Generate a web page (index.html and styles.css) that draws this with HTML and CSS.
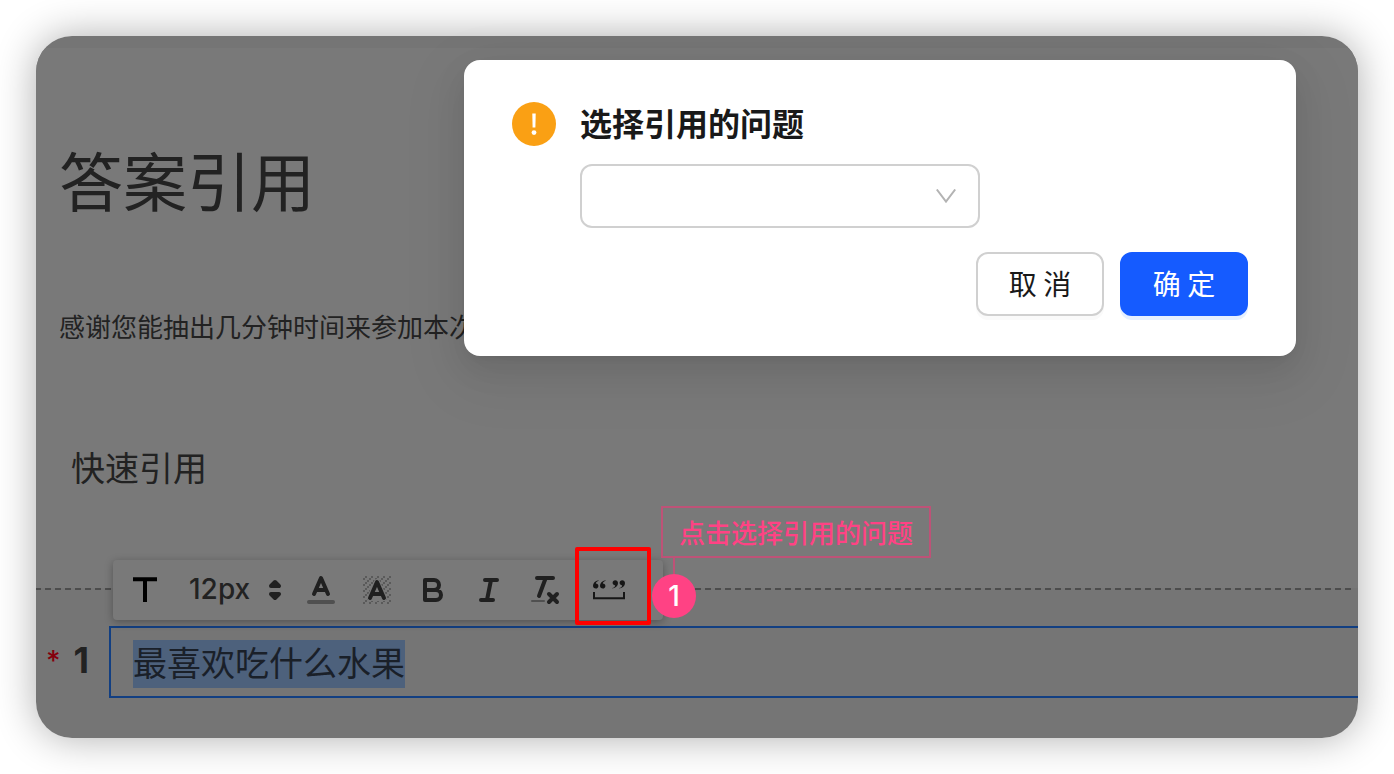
FILE: index.html
```html
<!DOCTYPE html>
<html lang="zh-CN">
<head>
<meta charset="utf-8">
<title>答案引用</title>
<link rel="stylesheet" href="styles.css">
</head>
<body>
<main class="frame">
  <div class="survey">
    <header class="survey-head">
      <h1 class="survey-title">答案引用</h1>
      <p class="survey-intro">感谢您能抽出几分钟时间来参加本次</p>
      <h2 class="survey-section">快速引用</h2>
    </header>
    <section class="question">
      <div class="question-divider"></div>
      <div class="question-row">
        <div class="question-index"><span class="required">*</span><span class="number">1</span></div>
        <div class="question-editor" role="textbox" aria-label="题目"><span class="selection">最喜欢吃什么水果</span></div>
      </div>
      <div class="toolbar" role="toolbar" aria-label="文本格式">
        <button class="tool tool-text" type="button" aria-label="字体">
          <svg width="24" height="26" viewBox="0 0 24 26"><path d="M0 2.2H24M12 2V25" fill="none" stroke="#000" stroke-width="4"/></svg>
        </button>
        <div class="size-picker">
          <select class="size-select" aria-label="字号"><option>12px</option></select>
          <svg class="size-arrows" width="36" height="36" viewBox="0 0 18 18"><path class="solid" d="M7 11L9 13L11 11ZM7 7L9 5L11 7Z"/></svg>
        </div>
        <button class="tool" type="button" aria-label="文字颜色">
          <svg width="36" height="36" viewBox="0 0 18 18"><path class="stroke faint" d="M3 15H15"/><path class="stroke" d="M5.5 11L9 3L12.5 11M11.63 9H6.38"/></svg>
        </button>
        <button class="tool" type="button" aria-label="背景颜色">
          <svg width="36" height="36" viewBox="0 0 18 18">
            <pattern id="hatch" width="3" height="3" patternUnits="userSpaceOnUse"><path class="hatch" d="M2 0h1v1h-1zM1 1h1v1h-1zM0 2h1v1h-1z"/></pattern>
            <rect x="2" y="2" width="14" height="14" fill="url(#hatch)"/>
            <path class="halo" d="M5.5 13L9 5L12.5 13Z"/>
            <path class="stroke" d="M5.5 13L9 5L12.5 13M11.63 11H6.38"/>
          </svg>
        </button>
        <button class="tool" type="button" aria-label="加粗">
          <svg width="36" height="36" viewBox="0 0 18 18"><path class="stroke" d="M5 4H9.5A2.5 2.5 0 0 1 9.5 9H5ZM5 9H10.5A2.5 2.5 0 0 1 10.5 14H5Z"/></svg>
        </button>
        <button class="tool" type="button" aria-label="斜体">
          <svg width="36" height="36" viewBox="0 0 18 18"><path class="stroke" d="M7 4H13M5 14H11M8 14L10 4"/></svg>
        </button>
        <button class="tool" type="button" aria-label="清除格式">
          <svg width="36" height="36" viewBox="0 0 18 18"><path class="stroke" d="M5 3H13M6 12L9.35 3M11 11L15 15M15 11L11 15"/><rect class="rule" x="2" y="14" width="7" height="1" rx=".5"/></svg>
        </button>
        <button class="tool tool-quote" type="button" aria-label="引用答案">
          <svg width="32" height="20" viewBox="0 0 32 20">
            <g fill="#161616">
              <path id="open-quote" d="M5.6 .2C2 .8 0 3 0 5.8C0 7.5 1.2 8.6 2.8 8.6C4.3 8.6 5.4 7.5 5.4 6C5.4 4.5 4.4 3.6 2.8 3.4C3.1 2.1 4.1 1.2 5.6 .7Z"/>
              <use href="#open-quote" x="7"/>
              <use href="#open-quote" transform="rotate(180 16 4.4)"/>
              <use href="#open-quote" transform="rotate(180 12.5 4.4)"/>
            </g>
            <path d="M1 12V18.2H31V12" fill="none" stroke="#161616" stroke-width="2"/>
          </svg>
        </button>
        <div class="highlight-box"></div>
        <div class="callout">
          <div class="callout-text">点击选择引用的问题</div>
          <div class="callout-line"></div>
          <div class="callout-badge">1</div>
        </div>
      </div>
    </section>
  </div>
  <div class="dialog" role="dialog" aria-labelledby="dialog-title">
    <svg class="dialog-icon" width="44" height="44" viewBox="0 0 44 44"><circle cx="22" cy="22" r="22" fill="#faa014"/><path d="M20.3 11.5H23.7L23.4 25.5H20.6Z" fill="#fff"/><circle cx="22" cy="30.6" r="2.4" fill="#fff"/></svg>
    <div class="dialog-body">
      <label class="dialog-title" id="dialog-title" for="question-select">选择引用的问题</label>
      <div class="select-wrap">
        <select class="question-select" id="question-select"><option value=""></option></select>
        <svg class="chevron" width="20" height="14" viewBox="0 0 20 14"><path d="M.8 .5L10 12.6L19.2 .5" fill="none" stroke="#b3b3b3" stroke-width="2"/></svg>
      </div>
    </div>
    <div class="dialog-actions">
      <button class="btn" type="button">取 消</button>
      <button class="btn btn-primary" type="button">确 定</button>
    </div>
  </div>
</main>
</body>
</html>
```
FILE: styles.css
```css
* {
  box-sizing: border-box;
}

body {
  margin: 0;
  padding: 36px;
  background: #fff;
  color: #222;
  font-family: "Noto Sans CJK SC", sans-serif;
}

button,
select {
  margin: 0;
  font-family: inherit;
  color: inherit;
  appearance: none;
}

.frame {
  position: relative;
  border-radius: 36px;
  box-shadow: 0 0 40px rgba(0, 0, 0, 0.32);
}

.survey {
  overflow: hidden;
  border-radius: 36px;
  background: #757575;
}

.survey-head {
  margin-top: 12px;
  padding: 90px 23px 97px;
  background: #797979;
}

.survey-title {
  margin: 0;
  font-size: 64px;
  line-height: 80px;
  font-weight: 400;
}

.survey-intro {
  margin: 88px 0 0;
  font-size: 26px;
  line-height: 40px;
}

.survey-section {
  margin: 97px 0 0 12px;
  font-size: 34px;
  line-height: 48px;
  font-weight: 400;
}

.question {
  position: relative;
  padding-bottom: 40px;
}

.question-divider {
  height: 2px;
  margin-right: 4px;
  background: repeating-linear-gradient(90deg, #4c4c4c 0 5px, transparent 5px 9px, #4c4c4c 9px 10px);
}

.question-row {
  display: flex;
  margin-top: 36px;
}

.question-index {
  display: flex;
  align-items: center;
  justify-content: space-between;
  width: 73px;
  padding: 0 20px 4px 10px;
  font-family: Inter, sans-serif;
  line-height: 40px;
}

.required {
  padding-top: 2px;
  color: #85000c;
  font-size: 28px;
  font-weight: 500;
}

.number {
  font-size: 36px;
  font-weight: 700;
}

.question-editor {
  flex: 1;
  padding: 12px 22px 8px;
  border: 2px solid #123f82;
  border-right: 0;
  font-size: 34px;
  line-height: 48px;
}

.selection {
  display: inline-block;
  padding-bottom: 4px;
  background: #4d617c;
  color: #1a2029;
  line-height: 44px;
  vertical-align: top;
}

.toolbar {
  position: absolute;
  top: -28px;
  left: 77px;
  display: flex;
  padding: 6px 18px 6px 10px;
  border-radius: 4px;
  background: #797979;
  box-shadow: 0 2px 8px rgba(0, 0, 0, 0.3);
}

.tool {
  display: flex;
  align-items: center;
  justify-content: center;
  width: 56px;
  height: 48px;
  padding: 0;
  border: 0;
  background: none;
}

.tool-text {
  width: 44px;
}

.tool-quote {
  width: 72px;
}

.size-picker {
  position: relative;
  width: 126px;
}

.size-select {
  width: 100%;
  height: 48px;
  padding: 0 36px 2px 22px;
  border: 0;
  background: none;
  font-family: Inter, sans-serif;
  font-size: 28px;
  font-weight: 500;
}

.size-arrows {
  position: absolute;
  top: 6px;
  right: 0;
  pointer-events: none;
}

.stroke,
.solid {
  fill: none;
  stroke: #202020;
  stroke-width: 2;
  stroke-linecap: round;
  stroke-linejoin: round;
}

.solid {
  fill: #202020;
}

.faint {
  stroke: #505050;
}

.rule {
  fill: #505050;
}

.hatch {
  fill: #5a5a5a;
}

.halo {
  fill: #797979;
  stroke: #797979;
  stroke-width: 3;
  stroke-linejoin: round;
}

.highlight-box {
  position: absolute;
  top: -13px;
  left: 462px;
  width: 76px;
  height: 78px;
  border: 4px solid #f00;
  border-radius: 2px;
}

.callout {
  position: absolute;
  top: -54px;
  left: 539px;
  color: #ff4284;
}

.callout-text {
  margin-left: 9px;
  padding: 6px 16px;
  border: 2px solid #be5277;
  font-size: 26px;
  line-height: 36px;
  font-weight: 500;
  white-space: nowrap;
}

.callout-line {
  width: 2px;
  height: 16px;
  margin-left: 21px;
  background: #be5277;
}

.callout-badge {
  width: 44px;
  height: 44px;
  border-radius: 50%;
  background: #ff4284;
  color: #fff;
  font-family: Inter, sans-serif;
  font-size: 28px;
  line-height: 44px;
  font-weight: 500;
  text-align: center;
}

.dialog {
  position: absolute;
  top: 24px;
  right: 62px;
  left: 428px;
  display: grid;
  grid-template-columns: 44px 1fr;
  gap: 24px;
  padding: 42px 48px 40px;
  border-radius: 16px;
  background: #fff;
  color: #191919;
  box-shadow:
    0 6px 12px -8px rgba(0, 0, 0, 0.12),
    0 12px 32px rgba(0, 0, 0, 0.08),
    0 18px 56px 16px rgba(0, 0, 0, 0.05);
}

.dialog-title {
  display: block;
  font-size: 32px;
  line-height: 40px;
  font-weight: 600;
}

.select-wrap {
  position: relative;
  width: 400px;
  margin-top: 22px;
}

.question-select {
  display: block;
  width: 100%;
  height: 64px;
  padding: 0 48px 0 20px;
  border: 2px solid #d0d0d0;
  border-radius: 12px;
  background: #fff;
  font-size: 28px;
}

.chevron {
  position: absolute;
  top: 25px;
  right: 24px;
  pointer-events: none;
}

.dialog-actions {
  grid-column: 1 / -1;
  display: flex;
  justify-content: flex-end;
  gap: 16px;
}

.btn {
  width: 128px;
  height: 64px;
  padding: 0 0 2px;
  border: 2px solid #d0d0d0;
  border-radius: 12px;
  background: #fff;
  box-shadow: 0 4px 0 #fafafa;
  font-size: 28px;
  line-height: 40px;
}

.btn-primary {
  border-color: #155bff;
  background: #155bff;
  color: #fff;
  box-shadow: 0 4px 0 #e6f0ff;
}
```
